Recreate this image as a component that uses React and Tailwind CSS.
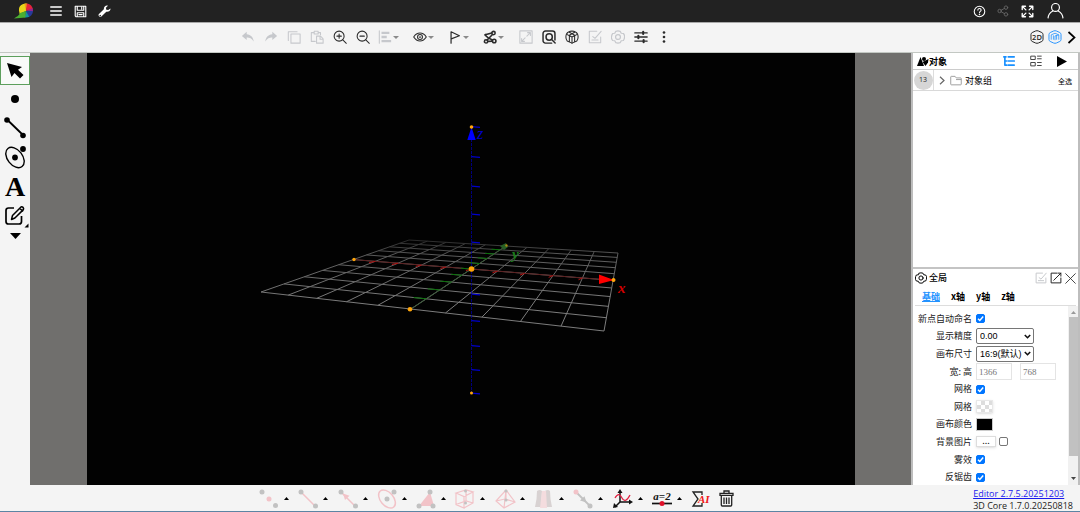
import React from 'react';

/* ---------- shared drawing helpers ---------- */
function Svg({ size = 'size-[14px]', box = 16, w = 1.2, children }) {
  return (
    <svg className={`${size} shrink-0`} viewBox={`0 0 ${box} ${box}`} fill="none" stroke="currentColor" strokeWidth={w} strokeLinecap="round" strokeLinejoin="round" aria-hidden="true">
      {children}
    </svg>
  );
}

function Btn({ label, className = 'justify-center', children }) {
  return (
    <button type="button" aria-label={label} title={label} className={`flex items-center ${className}`}>
      {children}
    </button>
  );
}

const dot = { fill: 'currentColor', stroke: 'none' };

const icons = {
  undo: <path {...dot} d="M6.500 2 1 6.800l5.500 4.500V8.600c3-.2 5.400.8 8 4.400C14 8.600 11.500 5.300 6.500 4.900z" />,
  redo: <path {...dot} d="M9.500 2 15 6.800l-5.500 4.500V8.600c-3-.2-5.400.8-8 4.400C2 8.600 4.500 5.300 9.500 4.900z" />,
  copy: (
    <>
      <path d="M11.500 2H1.500v10" />
      <rect x="4.500" y="4.500" width="10.500" height="10.500" />
    </>
  ),
  paste: (
    <>
      <path d="M6 13H1.500V3h3M9.500 3H12v2.500M4.800 1.500h4.500v3H4.800z" />
      <path d="M7.500 7H12l3 3v5H7.500zM11.500 7v3.500H15" />
    </>
  ),
  zoomIn: (
    <>
      <circle cx="7" cy="7" r="5.700" />
      <path d="M11.200 11.200l4 4M7 4.500v5M4.500 7h5" />
    </>
  ),
  zoomOut: (
    <>
      <circle cx="7" cy="7" r="5.700" />
      <path d="M11.200 11.200l4 4M4.500 7h5" />
    </>
  ),
  align: (
    <>
      <path d="M1.500 1v14" />
      <path {...dot} d="M4 2h9v2.700H4zM4 6.700h6v2.700H4zM4 11.400h11v2.700H4z" />
    </>
  ),
  eye: (
    <>
      <path d="M.8 8C3 4.500 5.500 3.500 8 3.500S13 4.500 15.200 8C13 11.500 10.500 12.500 8 12.500S3 11.500.8 8z" />
      <circle cx="8" cy="8" r="2.800" />
      <circle cx="8" cy="8" r="1" {...dot} />
    </>
  ),
  flag: <path d="M3.500 15V2l9.500 4.600-9.300 3.600" />,
  nodes: (
    <>
      <circle cx="12" cy="3.500" r="1.900" />
      <circle cx="3.500" cy="13" r="1.900" />
      <circle cx="12.800" cy="12.500" r="2" />
      <path d="M2.500 5.500l7.500-2M4.800 11.500l6-6.300M2.500 6l3.500 3 4.800 2.500M5.500 13l5-.3" />
      <circle cx="3" cy="5.500" r="1.300" {...dot} />
    </>
  ),
  expand: (
    <>
      <rect x="1" y="1" width="14" height="14" />
      <path d="M9 7l4-4M9.800 3H13v3.200M7 9l-4 4M3 9.800V13h3.200" />
    </>
  ),
  search: (
    <>
      <path d="M11 15H4A2.800 2.800 0 0 1 1.200 12V4A2.800 2.800 0 0 1 4 1.200h8A2.800 2.800 0 0 1 14.800 4v7.500" />
      <circle cx="8.200" cy="8" r="3.600" />
      <path d="M11 10.800l4 4" />
    </>
  ),
  cube: (
    <>
      <path d="M8 1.200Q12.500 1.500 14.300 4.500 16 9 13.500 12.500L8 15l-5.500-2.500Q0 9 1.700 4.500 3.500 1.500 8 1.200z" />
      <path d="M2 5l6 3 6-3M8 8v7M5 2.500l6 3.500M11 2.500L5 6M5 6.500V13M11 6.500V13" />
    </>
  ),
  edit: <path d="M10 1.500H1.500v13h13V8M4.500 11.500h7M5.500 7.500l2.500 2 7-8" />,
  gear: (
    <>
      <path d="M5.500 1.500q2.500-.8 5 0l1.200 2.200 2.500.3q1.600 1.800 1.300 4-.1 2.200-1.300 4l-2.500.3-1.200 2.200q-2.500.8-5 0l-1.200-2.200L1.800 12Q.3 10 .5 8t1.300-4l2.500-.3z" />
      <circle cx="8" cy="8" r="2.800" />
    </>
  ),
  sliders: (
    <>
      <path d="M1 3.300h14M1 8h14M1 12.700h14" />
      <path d="M10.500 2v2.600M5 6.700v2.600M11 11.400V14" strokeWidth="2.400" />
    </>
  ),
  more: (
    <>
      <circle cx="8" cy="2.800" r="1.500" {...dot} />
      <circle cx="8" cy="8" r="1.500" {...dot} />
      <circle cx="8" cy="13.200" r="1.500" {...dot} />
    </>
  ),
};

const heavy = { sliders: 1.6, search: 1.7, nodes: 1.8, flag: 1.4, gear: 1.4 };

const toolbar = [
  ['undo', '撤销', true],
  ['redo', '重做', true],
  ['copy', '复制', true],
  ['paste', '粘贴', true],
  ['zoomIn', '放大'],
  ['zoomOut', '缩小'],
  ['align', '对齐', true, true],
  ['eye', '显示', false, true],
  ['flag', '标记', false, true],
  ['nodes', '路径', false, true],
  ['expand', '适应', true],
  ['search', '查找'],
  ['cube', '立方体'],
  ['edit', '编辑', true],
  ['gear', '设置', true],
  ['sliders', '选项'],
  ['more', '更多'],
];

/* ---------- top bars ---------- */
function TopBar() {
  return (
    <header className="flex h-[23px] shrink-0 items-center justify-between border-b border-[#a8a8a8] bg-[#222] px-3.5 text-white">
      <div className="flex items-center gap-1.5">
        <svg className="mr-1 h-[18px] w-[23px]" viewBox="0 0 23 18" aria-label="logo">
          <defs>
            <clipPath id="ball"><path d="M0 16.500C3 14.500 6 13 5.500 11 3.500 5 7 1.500 12 1.500c4.500 0 7 3.300 7 7S16.500 15.500 12 15.500C8 15.800 4 16 0 16.500z" /></clipPath>
          </defs>
          <g clipPath="url(#ball)">
            <path fill="#e8d51a" d="M3 0h10l-1 9-9 4z" />
            <path fill="#f39a19" d="M10 0h4l-2 9z" />
            <path fill="#e5233b" d="M13 0h8v7l-9 2z" />
            <path fill="#93278f" d="M21 5v5l-9-1z" />
            <path fill="#283a9a" d="M21 9v9h-5l-4-9z" />
            <path fill="#148fa0" d="M12 9l5 9h-7z" />
            <path fill="#4bae32" d="M12 9l-1 9H0v-4l6-3z" />
          </g>
        </svg>
        <Btn label="菜单" className="w-[18px] justify-center">
          <Svg size="size-[14px]" w={1.6}><path d="M2 3.500h12M2 8h12M2 12.500h12" /></Svg>
        </Btn>
        <Btn label="保存" className="w-[18px] justify-center">
          <Svg size="size-[13px]" w={1.4}><path d="M1.500 1.500h13v13h-12l-1-1zM4 2v4.500h8V2M9.500 3v2M4 14V9.500h8V14M6 11.800h4" /></Svg>
        </Btn>
        <Btn label="工具" className="w-[18px] justify-center">
          <Svg size="size-[13px]"><path {...dot} d="M15.300 4.300l-2.700 2-2.400-.6-.5-2.300L12.200.9C9.500.2 7 2 7.200 5.200L1.200 11c-1.800 2 1 5 3 3.300l6-6c3.300.5 5.600-1.500 5.100-4zM2.700 14a.9.9 0 1 1 .1 0z" /></Svg>
        </Btn>
      </div>
      <div className="flex items-center gap-[10px]">
        <Btn label="帮助" className="w-[14px] justify-center">
          <Svg size="size-[13px]" w={1.3}><circle cx="8" cy="8" r="6.500" /><path d="M6 6.300c0-2.600 4-2.500 4 0C10 8 8 7.800 8 9.400" /><circle cx="8" cy="11.700" r="1" {...dot} /></Svg>
        </Btn>
        <Btn label="分享" className="w-[14px] justify-center text-[#666]">
          <Svg size="size-[12px]"><circle cx="3.500" cy="8" r="2.300" /><circle cx="12" cy="3.500" r="2.300" /><circle cx="12" cy="12.500" r="2.300" /><path d="M5.500 7l4.500-2.500M5.500 9l4.500 2.500" /></Svg>
        </Btn>
        <Btn label="全屏" className="w-[14px] justify-center">
          <Svg size="size-[13px]" w={1.7}><path d="M1.500 5.500v-4h4M10.500 1.500h4v4M14.500 10.500v4h-4M5.500 14.500h-4v-4M2 2l4 4M14 2l-4 4M14 14l-4-4M2 14l4-4" /></Svg>
        </Btn>
        <Btn label="用户" className="w-[22px] justify-center">
          <Svg size="size-[17px]" w={1.1}><circle cx="8" cy="4.200" r="3.700" /><path d="M1 14C1.300 9.800 4 8.300 5.500 7.400M15 14c-.3-4.200-3-5.700-4.500-6.600" /></Svg>
        </Btn>
      </div>
    </header>
  );
}

function Hex({ children }) {
  return (
    <svg className="size-[14px]" viewBox="0 0 26 26" fill="none" stroke="currentColor" strokeWidth="1.800" aria-hidden="true">
      <path d="M10 2q3-1.500 6 0l6 2.800q2.200 1.200 2.200 3.500v9.400q0 2.300-2.200 3.500L16 24q-3 1.500-6 0l-6-2.800q-2.200-1.200-2.200-3.500V8.300Q1.800 6 4 4.800z" />
      {children}
    </svg>
  );
}

function ToolBar() {
  return (
    <div className="flex h-[30px] shrink-0 items-center border-b border-[#c3c8c3] bg-[#f4f4f4] pb-px">
      <div className="flex flex-1 justify-center">
        {toolbar.map(([name, label, off, menu]) => (
          <Btn key={name} label={label} className={`${menu ? 'w-[35px] gap-px pl-[4px]' : 'w-[23px] justify-center'} ${off ? 'text-[#c6c8cc]' : 'text-[#2b2b2b]'}`}>
            <Svg w={heavy[name] ?? 1.2}>{icons[name]}</Svg>
            {menu && <svg className="h-[3px] w-[6px] text-[#8a8a8a]" viewBox="0 0 6 3" fill="currentColor" aria-hidden="true"><path d="M0 0h6L3 3z" /></svg>}
          </Btn>
        ))}
      </div>
      <div className="flex w-[169px] items-center justify-end gap-[4px] pr-1">
        <Btn label="2D" className="text-[#222]">
          <Hex><text x="13" y="18" textAnchor="middle" fontSize="14" fontWeight="600" fill="currentColor" stroke="none" fontFamily="Open Sans, sans-serif">2D</text></Hex>
        </Btn>
        <Btn label="3D" className="text-[#2493ff]">
          <Hex><path strokeWidth="1.500" d="M6 9l7-3 7 3M6 9v9M20 9v9M10 10v8M13 11v8M16 10v8M13 11l7-2" /></Hex>
        </Btn>
        <Btn label="展开" className="pl-px text-black">
          <svg className="h-[13px] w-[9px]" viewBox="0 0 9 13" fill="none" stroke="currentColor" strokeWidth="1.700" aria-hidden="true"><path d="M1.500 1l6 5.500-6 5.500" /></svg>
        </Btn>
      </div>
    </div>
  );
}

/* ---------- left tools ---------- */
function LeftTools() {
  return (
    <nav className="flex w-[30px] shrink-0 flex-col items-center bg-[#f4f4f4] pt-[3px] text-black">
      <Btn label="选择" className="h-[29px] w-full justify-center border border-[#5c9f5c] bg-[#f8faf8]">
        <Svg size="size-[18px]" box={18}><path {...dot} d="M1 1l15 4-4 2.700 5.500 5.300-3.500 3.500L8.500 11l-3 4z" /></Svg>
      </Btn>
      <Btn label="点" className="h-[28px] w-full justify-center"><Svg size="size-[20px]" box={20}><circle {...dot} cx="10" cy="10" r="4" /></Svg></Btn>
      <Btn label="线段" className="h-[29px] w-full justify-center"><Svg size="size-[22px]" box={22} w={1.8}><path d="M3 2.500l16 15.500" /><circle {...dot} cx="3" cy="3" r="2.800" /><circle {...dot} cx="19" cy="18.500" r="2.800" /></Svg></Btn>
      <Btn label="圆" className="h-[29px] w-full justify-center"><Svg size="size-[24px]" box={24} w={1.4}><ellipse cx="12" cy="12.500" rx="7.500" ry="11.500" transform="rotate(-38 12 12.500)" /><circle {...dot} cx="12" cy="12.500" r="2.900" /><circle {...dot} cx="20" cy="4" r="2.900" /></Svg></Btn>
      <Btn label="文本" className="h-[31px] w-full justify-center font-['Liberation_Serif',serif] text-[28px] leading-none font-bold">A</Btn>
      <Btn label="绘制" className="h-[28px] w-full justify-end">
        <svg className="h-[24px] w-[26px]" viewBox="0 0 26 24" fill="none" stroke="currentColor" strokeWidth="1.700" strokeLinejoin="round" aria-hidden="true">
          <path d="M10 4H4.500Q2 4 2 6.500v11Q2 20 4.500 20h10.500q2.500 0 2.500-2.500V12" />
          <path d="M7.500 15.500l1-4 8.500-8.500q1-.6 2 .4t.4 2.200l-8.500 8.400zM16 4.500l3 3" strokeWidth="1.500" />
          <path {...dot} d="M24.500 19.500v4h-4z" />
        </svg>
      </Btn>
      <Btn label="更多工具" className="h-[12px] w-full justify-center"><svg className="h-[6px] w-[11px]" viewBox="0 0 11 6" aria-hidden="true"><path d="M0 0h11L5.500 6z" /></svg></Btn>
    </nav>
  );
}

/* ---------- 3D scene ---------- */
const corners = [[174, 239], [517, 278], [531, 200], [322, 187]];

function projector([p0, p1, p2, p3]) {
  const dx1 = p1[0] - p2[0], dx2 = p3[0] - p2[0], sx = p0[0] - p1[0] + p2[0] - p3[0];
  const dy1 = p1[1] - p2[1], dy2 = p3[1] - p2[1], sy = p0[1] - p1[1] + p2[1] - p3[1];
  const det = dx1 * dy2 - dx2 * dy1;
  const g = (sx * dy2 - dx2 * sy) / det;
  const h = (dx1 * sy - sx * dy1) / det;
  return (u, v) => {
    const k = g * u + h * v + 1;
    return [
      ((p1[0] - p0[0] + g * p1[0]) * u + (p3[0] - p0[0] + h * p3[0]) * v + p0[0]) / k,
      ((p1[1] - p0[1] + g * p1[1]) * u + (p3[1] - p0[1] + h * p3[1]) * v + p0[1]) / k,
    ];
  };
}
const project = projector(corners);
const steps = Array.from({ length: 11 }, (_, i) => i / 10);

function Line({ a, b, ...rest }) {
  const [x1, y1] = project(...a);
  const [x2, y2] = project(...b);
  return <line x1={x1} y1={y1} x2={x2} y2={y2} {...rest} />;
}

function Scene() {
  return (
    <main className="flex min-w-0 flex-1 justify-center bg-[#706f6d]">
      <svg className="aspect-video h-full bg-[#020202]" viewBox="0 0 768 432" role="img" aria-label="3D 坐标系">
        <defs>
          <linearGradient id="fog" gradientUnits="userSpaceOnUse" x1="0" y1="186" x2="0" y2="250">
            <stop offset="0" stopColor="#262626" />
            <stop offset="0.250" stopColor="#5a5a5a" />
            <stop offset="1" stopColor="#7c7c7c" />
          </linearGradient>
        </defs>
        <g stroke="url(#fog)" strokeWidth="1">
          {steps.map((s) => (
            <React.Fragment key={s}>
              <Line a={[0, s]} b={[1, s]} />
              <Line a={[s, 0]} b={[s, 1]} />
            </React.Fragment>
          ))}
        </g>
        <Line a={[0, 0.5]} b={[1, 0.5]} stroke="#5d2020" strokeWidth="1" />
        <Line a={[0.5, 0]} b={[0.5, 1]} stroke="#3a5a38" strokeWidth="1" />
        <g strokeWidth="1">
          {steps.slice(1, 10).map((s) => (
            <React.Fragment key={s}>
              <Line a={[s, 0.5]} b={[s - 0.01, 0.47]} stroke="#b01010" />
              <Line a={[0.5, s]} b={[0.46, s]} stroke="#087008" />
            </React.Fragment>
          ))}
        </g>
        <path d="M384.500 74v266" stroke="#0000b0" strokeWidth="1" strokeDasharray="3 1" opacity=".7" />
        {[74, 104, 133.5, 161.5, 189.5, 241.5, 268, 293, 317, 340.5].map((y) => (
          <path key={y} d={`M384.500 ${y - 0.3}l8.500 .6`} stroke="#0000cc" strokeWidth="1.200" />
        ))}
        <path d="M384.500 74l4.200 13h-8.400z" fill="#00f" />
        <path d="M512 221.500v9.500l15-4z" fill="#f00" />
        <path d="M413 193l6-3 2 4-4 3z" fill="#275f25" />
        <g fill="#ffa50a">
          <circle cx="384.500" cy="74" r="1.800" />
          <circle cx="384.500" cy="216" r="2.800" />
          <circle cx="384.500" cy="340" r="1.500" />
          <circle cx="267" cy="206.500" r="1.700" />
          <circle cx="323" cy="256.300" r="2.300" />
          <circle cx="526.500" cy="227" r="2" />
          <circle cx="419.500" cy="192.500" r="1.200" opacity=".6" />
        </g>
        <g fontFamily="Liberation Serif, serif" fontStyle="italic" fontWeight="700" fontSize="15">
          <text x="390" y="86" fill="#0000c8" fontWeight="400" fontSize="16">z</text>
          <text x="425" y="206" fill="#1a7a1a">y</text>
          <text x="531" y="240" fill="#d00000">x</text>
        </g>
      </svg>
    </main>
  );
}

/* ---------- right panels ---------- */
function Check({ id, on, label }) {
  return (
    <span className="relative flex size-[9px]">
      <input id={id} type="checkbox" aria-label={label} defaultChecked={on} className="peer size-[9px] appearance-none rounded-[2px] border border-[#767676] bg-white checked:border-[#0075ff] checked:bg-[#0075ff]" />
      <svg className="pointer-events-none absolute inset-0 hidden size-[9px] peer-checked:block" viewBox="0 0 9 9" fill="none" stroke="#fff" strokeWidth="1.400" aria-hidden="true"><path d="M2 4.700l1.800 1.800L7.200 2.500" /></svg>
    </span>
  );
}

function Pick({ id, options }) {
  return (
    <span className="relative flex w-[58px] items-center">
      <select id={id} className="h-[16px] w-full appearance-none rounded-[2px] border border-[#767676] bg-white pl-[3px] font-['Liberation_Sans','Noto_Sans_CJK_SC',sans-serif] text-[9px] leading-[14px] text-black">
        {options.map((o) => <option key={o}>{o}</option>)}
      </select>
      <svg className="pointer-events-none absolute right-[3px] h-[5px] w-[7px]" viewBox="0 0 7 5" fill="none" stroke="#111" strokeWidth="1.600" aria-hidden="true"><path d="M.8 1l2.700 2.700L6.200 1" /></svg>
    </span>
  );
}

function Row({ label, id, children }) {
  return (
    <div className="flex items-center gap-1">
      <label htmlFor={id} className="w-[55px] shrink-0 text-right whitespace-nowrap">{label}</label>
      {children}
    </div>
  );
}

const numberBox = "h-[17px] w-[36px] border border-[#e4e4e4] bg-white pl-[2px] font-['Liberation_Serif',serif] text-[9px] text-[#777]";

function SidePanels() {
  return (
    <aside className="flex w-[169px] shrink-0 flex-col border-x-2 border-[#bdbdbd] bg-white text-[9px] leading-[14px] text-black">
      <section className="flex min-h-0 flex-1 flex-col">
        <div className="flex h-[17px] shrink-0 items-center border-b border-[#ccc] px-[4px]">
          <svg className="h-[11px] w-[12px]" viewBox="0 0 12 11" aria-hidden="true">
            <path d="M0 10L3.500 1l3.500 9z" /><circle cx="7" cy="3" r="2" /><path d="M5.500 6l6-3-.5 3.500L8.500 10z" />
          </svg>
          <h2 className="pt-px font-bold">对象</h2>
          <div className="ml-auto flex items-center gap-[15px] pr-[7px]">
            <Btn label="树形" className="text-[#1890ff]"><Svg size="size-[12px]" w={2.2}><path d="M1 2.500h3M7 2.500h8M7 8h8M7 13.500h8M2.500 3v10.500H5M2.500 8H5" /></Svg></Btn>
            <Btn label="列表" className="text-[#333]"><Svg size="size-[12px]" w={1.2}><path d="M1.500 1.500H7V6H1.500zM1.500 10H7v4.500H1.500zM10 1.500h5M10 5h5M10 10h5M10 14h5" /></Svg></Btn>
            <Btn label="播放"><svg className="h-[11px] w-[10px]" viewBox="0 0 10 11" aria-hidden="true"><path d="M0 0l10 5.500L0 11z" /></svg></Btn>
          </div>
        </div>
        <div className="flex h-[21px] shrink-0 items-center border-b border-[#d9d9d9] pr-[6px]">
          <span className="flex h-full w-[21px] items-center justify-center border-r border-[#ddd]">
            <span className="flex size-[19px] items-center justify-center rounded-full bg-[#d6d6d6] font-['Open_Sans',sans-serif] text-[7px] text-[#222]">13</span>
          </span>
          <Btn label="展开对象组" className="w-[16px] justify-center text-[#666]"><svg className="h-[9px] w-[6px]" viewBox="0 0 6 9" fill="none" stroke="currentColor" strokeWidth="1.200" aria-hidden="true"><path d="M1 .8l4 3.700-4 3.700" /></svg></Btn>
          <svg className="mr-[3px] h-[11px] w-[12px]" viewBox="0 0 13 11" fill="none" stroke="#999" aria-hidden="true"><path d="M1.500 1h4l1.300 1.700h4.700q.7 0 .7.700v6.100q0 .7-.7.700h-10q-.7 0-.7-.7V1.700q0-.7.700-.7zM6.500 4.500h5.700" /></svg>
          <span className="pt-px">对象组</span>
          <button type="button" className="ml-auto pt-px text-[7px]">全选</button>
        </div>
      </section>
      <section className="flex h-[218px] shrink-0 flex-col border-t-2 border-[#c4c4c4]">
        <div className="flex h-[18px] shrink-0 items-center gap-[2px] px-[2px]">
          <Svg size="size-[12px]" w={1.3}>{icons.gear}</Svg>
          <h2 className="font-medium">全局</h2>
          <div className="ml-auto flex items-center gap-[3px]">
            <Btn label="编辑" className="text-[#c6c8cc]"><Svg size="size-[12px]" w={1.3}>{icons.edit}</Svg></Btn>
            <Btn label="弹出" className="text-[#222]"><Svg size="size-[12px]" w={1.3}><path d="M9 1.500H1.500v13h13V8M5 11l9.500-9.500M10.500 1.500h4v4" /></Svg></Btn>
            <Btn label="关闭" className="text-[#333]"><Svg size="size-[11px]" w={1.3}><path d="M1 1l14 14M15 1L1 15" /></Svg></Btn>
          </div>
        </div>
        <div role="tablist" className="mx-[2px] flex h-[19px] shrink-0 items-center gap-[11px] border-b border-[#ddd] px-[7px] pt-px font-bold">
          <button type="button" role="tab" aria-selected="true" className="text-[#2493ff] underline">基础</button>
          <button type="button" role="tab" aria-selected="false">x轴</button>
          <button type="button" role="tab" aria-selected="false">y轴</button>
          <button type="button" role="tab" aria-selected="false">z轴</button>
        </div>
        <div className="flex min-h-0 flex-1 overflow-hidden">
          <form className="mt-1 grid h-44 flex-1 auto-rows-fr pl-[4px] text-[#222]">
            <Row label="新点自动命名" id="auto"><Check id="auto" on /></Row>
            <Row label="显示精度" id="prec"><Pick id="prec" options={['0.00', '0.0']} /></Row>
            <Row label="画布尺寸" id="ratio"><Pick id="ratio" options={['16:9(默认)', '4:3']} /></Row>
            <Row label="宽: 高" id="cw">
              <input id="cw" className={numberBox} defaultValue="1366" />
              <input aria-label="高" className={`${numberBox} ml-1`} defaultValue="768" />
            </Row>
            <Row label="网格" id="grid"><Check id="grid" on /></Row>
            <Row label="网格" id="gridColor">
              <button id="gridColor" type="button" aria-label="网格颜色" className="h-[13px] w-[17px] border border-[#e8e8e8] bg-[conic-gradient(#ddd_25%,#fff_0_50%,#ddd_0_75%,#fff_0)] bg-[length:8px_8px] shadow-sm" />
            </Row>
            <Row label="画布颜色" id="bg"><button id="bg" type="button" aria-label="画布颜色" className="h-[13px] w-[17px] border border-[#ccc] bg-black" /></Row>
            <Row label="背景图片" id="img">
              <button id="img" type="button" className="flex h-[11px] w-[20px] items-center justify-center border border-[#ddd] bg-white pb-[3px] text-[9px] leading-[9px] shadow-sm">...</button>
              <span className="-ml-[1px]"><Check id="useImg" label="使用背景图片" /></span>
            </Row>
            <Row label="雾效" id="fogOn"><Check id="fogOn" on /></Row>
            <Row label="反锯齿" id="aa"><Check id="aa" on /></Row>
          </form>
          <div className="flex w-[10px] shrink-0 flex-col items-center gap-[3px] bg-[#f1f1f1] py-[5px]" aria-hidden="true">
            <svg className="h-[3px] w-[5px]" viewBox="0 0 5 3" fill="#999"><path d="M0 3h5L2.500 0z" /></svg>
            <div className="mb-[18px] w-[9px] flex-1 bg-[#c1c1c1]" />
            <svg className="h-[3px] w-[5px]" viewBox="0 0 5 3" fill="#444"><path d="M0 0h5L2.500 3z" /></svg>
          </div>
        </div>
      </section>
    </aside>
  );
}

/* ---------- bottom bar ---------- */
const G = '#c2c2c2';
const P = '#f2c3c8';
const shapes = [
  ['多点', <><circle cx="3" cy="3" r="2.500" fill={G} /><circle cx="10" cy="10" r="2.500" fill={P} /><circle cx="16.500" cy="16.500" r="2.500" fill={G} /></>],
  ['线段', <><path d="M3 3l14 14" stroke={P} strokeWidth="1.500" /><circle cx="3" cy="3" r="2.500" fill={G} /><circle cx="17.500" cy="17" r="2.500" fill={G} /></>],
  ['向量', <><path d="M3 3l14 14" stroke={P} strokeWidth="1.500" /><path d="M5 4.500l6.500 2.200-4.500 4.300z" fill={P} /><circle cx="3" cy="3" r="2.500" fill={G} /><circle cx="17.500" cy="17" r="2.500" fill={G} /></>],
  ['圆', <><ellipse cx="10" cy="10" rx="6.500" ry="10.500" transform="rotate(-40 10 10)" stroke={P} strokeWidth="1.500" fill="none" /><circle cx="10" cy="10" r="2.500" fill={G} /><circle cx="17" cy="3" r="2.500" fill={G} /></>],
  ['多边形', <><path d="M14 3L3 17h15z" fill={P} /><circle cx="14" cy="3" r="2.500" fill={G} /><circle cx="3" cy="17" r="2.500" fill={G} /><circle cx="17" cy="17" r="2.500" fill={G} /></>],
  ['立方体', <><path d="M1 4l8 3.500L18 3l-7-2zM1 4v11.500L9 19V7.500M9 19l9-5V3M1 15.500l10-3.500 7 2M11 1v11" stroke={P} strokeWidth="1.200" fill="none" /><circle cx="10.500" cy="2" r="1.500" fill={G} /><circle cx="10.500" cy="14" r="1.500" fill={G} /></>],
  ['棱锥', <><path d="M11 1L1 12l8 7 11-6zM11 1L9 19M1 12l9-2 10 3M11 1v9" stroke={P} strokeWidth="1.200" fill="none" /><circle cx="11" cy="2" r="1.600" fill={G} /><circle cx="11" cy="11" r="1.600" fill={G} /></>],
  ['旋转体', <><path d="M3 2q3-2 5 0L7 18H1Q3 10 3 2zM11 2q3-2 5 0 0 8 2 16h-6z" fill="#d8d2d2" /><path d="M8 2h4l1 17H6z" fill="#f4dcde" /></>],
  ['变换', <><path d="M3 3l14 14" stroke={G} strokeWidth="1.800" /><path d="M13.500 13.500L7 11.500l4.500-4.200z" fill={G} /><circle cx="3" cy="3" r="2.500" fill={P} /><circle cx="17" cy="17" r="2.500" fill={G} /></>],
  ['函数', <><path d="M7 2v11M7 13h11M7 13l-5 5" stroke="#111" strokeWidth="1.500" fill="none" /><path d="M7 0l2.500 4h-5zM20 13l-4 2.500v-5zM0 19l1-5 4 4z" fill="#111" /><path d="M2 9c3-5 5-4 7 0s5 3 8-3" stroke="#e02040" strokeWidth="1.300" fill="none" /></>],
  ['参数', <><text x="10" y="11" textAnchor="middle" fontFamily="Liberation Serif, serif" fontStyle="italic" fontWeight="700" fontSize="11" fill="#111">a=2</text><path d="M0 14.500h20" stroke="#111" strokeWidth="1.700" /><circle cx="10" cy="14.500" r="2.500" fill="#e0102a" /></>],
];

function BottomBar() {
  return (
    <footer className="flex h-[27px] shrink-0 items-center border-b border-[#5c84a3] bg-[#f4f4f4]">
      <div className="flex flex-1 items-center justify-center pt-px pl-5">
        <div className="grid w-[432px] shrink-0 grid-cols-11">
          {shapes.map(([label, art]) => (
            <Btn key={label} label={label} className="gap-[5px]">
              <svg className="size-[20px] overflow-visible" viewBox="0 0 20 20" fill="none" aria-hidden="true">{art}</svg>
              <svg className="h-[3px] w-[5px]" viewBox="0 0 5 3" aria-hidden="true"><path d="M0 3h5L2.500 0z" /></svg>
            </Btn>
          ))}
        </div>
        <Btn label="公式 AI" className="mr-2 shrink-0">
          <svg className="h-[18px] w-[20px] overflow-visible" viewBox="0 0 20 18" aria-hidden="true">
            <path d="M11 5V2H2l5 7-5 7h9v-3" fill="none" stroke="#222" strokeWidth="1.300" />
            <text x="7" y="13" fontFamily="Liberation Serif, serif" fontStyle="italic" fontWeight="700" fontSize="11" fill="#f01818">AI</text>
          </svg>
        </Btn>
        <Btn label="删除" className="shrink-0">
          <svg className="h-[17px] w-[15px]" viewBox="0 0 15 17" fill="none" stroke="#222" strokeWidth="1.300" aria-hidden="true">
            <path d="M5 3V1h5v2M1 3.300h13v2H1zM2.300 5.500V15q0 1 1 1h8.400q1 0 1-1V5.500M5 7.500V14M7.500 7.500V14M10 7.500V14" />
          </svg>
        </Btn>
      </div>
      <div className="flex shrink-0 flex-col pt-[3px] pr-[7px] font-['Open_Sans',sans-serif] text-[9px] leading-[12px] whitespace-nowrap text-[#222]">
        <a href="#editor" className="text-[#1a1aee] underline">Editor 2.7.5.20251203</a>
        <span>3D Core 1.7.0.20250818</span>
      </div>
    </footer>
  );
}

export default function App() {
  return (
    <div className="flex h-screen flex-col overflow-hidden font-['Noto_Sans_CJK_SC',sans-serif]">
      <TopBar />
      <ToolBar />
      <div className="flex min-h-0 flex-1">
        <LeftTools />
        <Scene />
        <SidePanels />
      </div>
      <BottomBar />
    </div>
  );
}
